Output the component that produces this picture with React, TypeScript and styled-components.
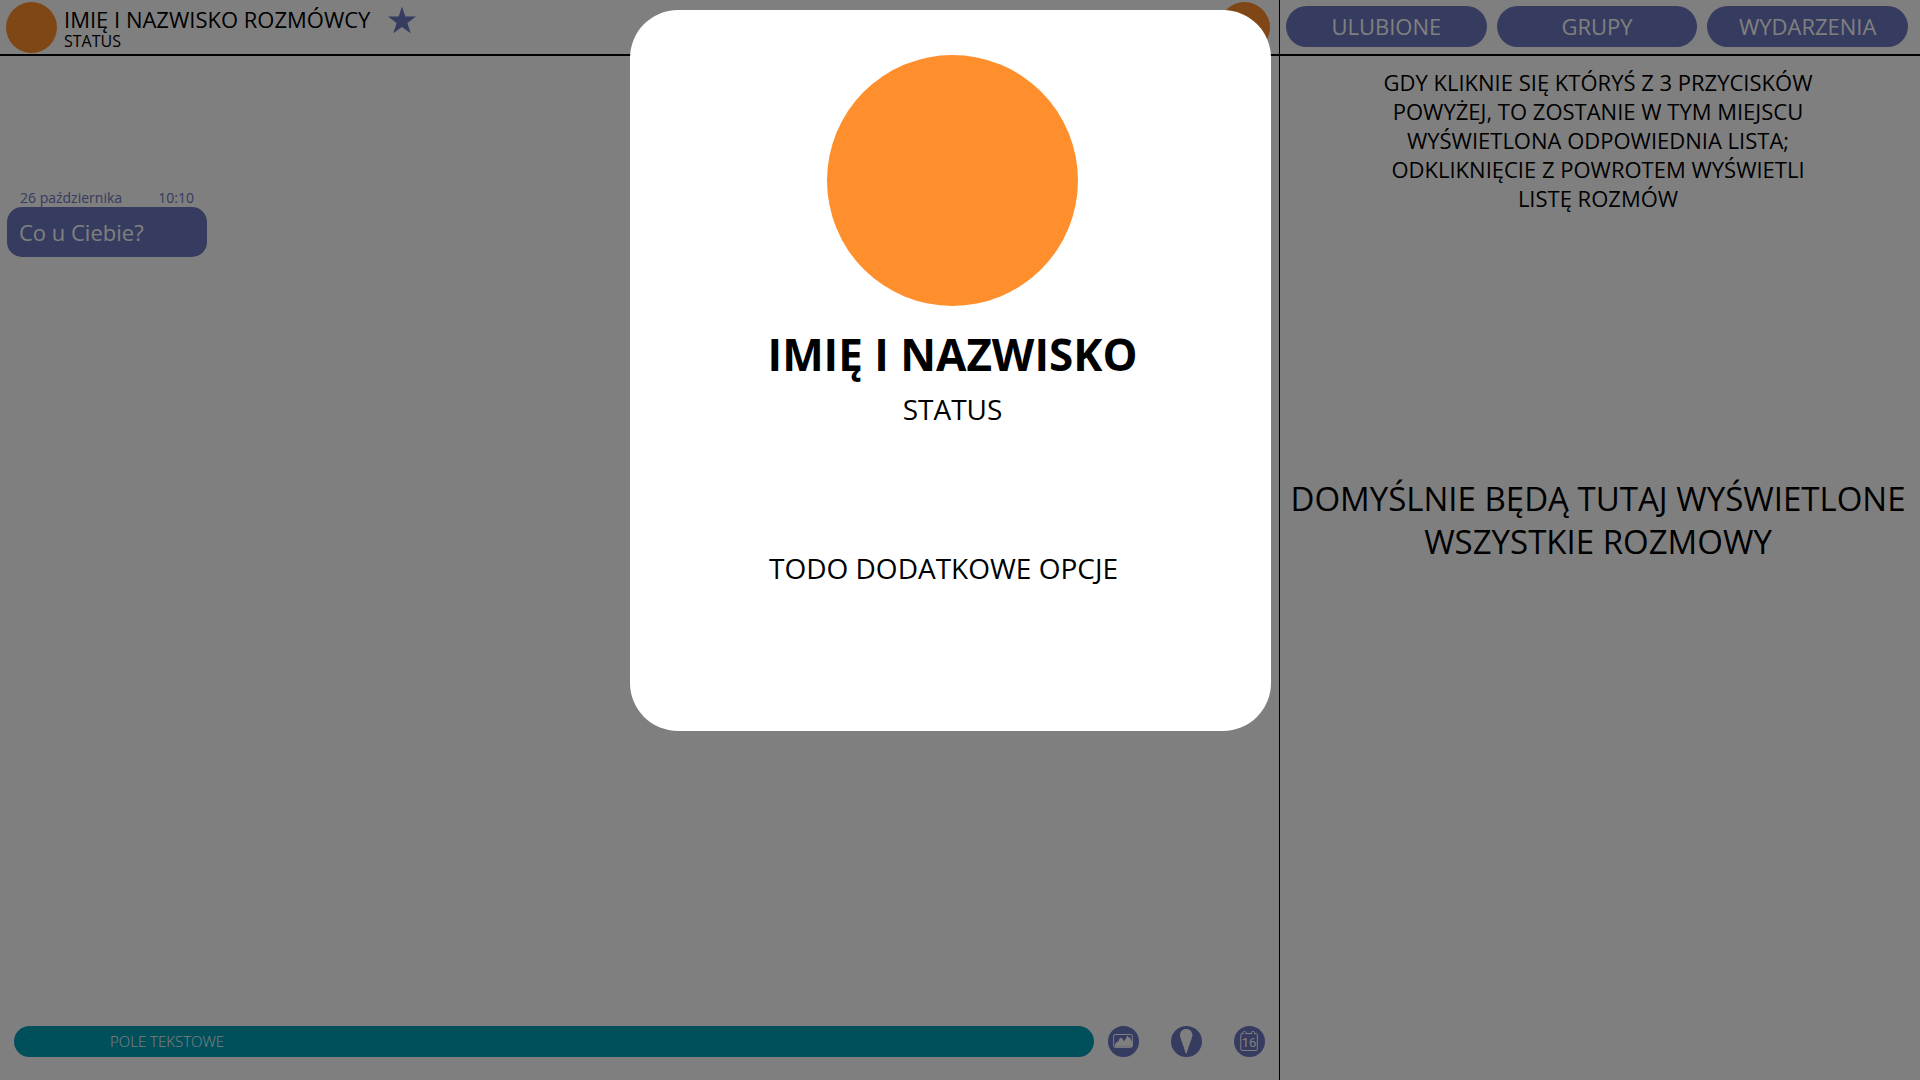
import React from 'react';
import styled, { createGlobalStyle } from 'styled-components';

const color = {
  ink: '#000000',
  paper: '#ffffff',
  violet: '#6c76c0',
  teal: '#00a0b8',
  orange: '#ff8f2d',
};

const GlobalStyle = createGlobalStyle`
  *, *::before, *::after { box-sizing: border-box; }
  body {
    margin: 0;
    background: ${color.paper};
    color: ${color.ink};
    font-family: 'Open Sans', 'Noto Sans', sans-serif;
  }
  h1, h2, p { margin: 0; font-weight: 400; }
  button, input { font-family: inherit; border: 0; margin: 0; }
  button { cursor: pointer; padding: 0; }
`;

const Page = styled.div`
  display: grid;
  grid-template-columns: 2fr 1fr;
  min-height: 100vh;
`;

const Conversation = styled.main`
  display: flex;
  flex-direction: column;
  border-right: 1px solid ${color.ink};
`;

const Sidebar = styled.aside`
  display: flex;
  flex-direction: column;
`;

const Bar = styled.header`
  display: flex;
  align-items: center;
  height: 56px;
  border-bottom: 2px solid ${color.ink};
`;

const ContactBar = styled(Bar)`
  padding: 0 9px 0 6px;
`;

const Avatar = styled.div<{ $size: number }>`
  flex: none;
  width: ${({ $size }) => $size}px;
  height: ${({ $size }) => $size}px;
  border-radius: 50%;
  background: ${color.orange};
`;

const Contact = styled.div`
  margin: 0 18px 0 7px;
`;

const ContactName = styled.h2`
  font-size: 22px;
  line-height: 27px;
`;

const ContactStatus = styled.p`
  font-size: 16px;
  line-height: 16px;
`;

const StarButton = styled.button`
  align-self: flex-start;
  display: flex;
  margin: 6px auto 0 0;
  background: none;
  color: ${color.violet};
`;

const Messages = styled.section`
  flex: 1;
  padding: 132px 7px 0;
`;

const Message = styled.article`
  width: 200px;
`;

const MessageMeta = styled.div`
  display: flex;
  justify-content: space-between;
  padding: 0 13px;
  color: ${color.violet};
  font-size: 14px;
  line-height: 19px;
`;

const Bubble = styled.p`
  padding: 0 12px;
  border-radius: 15px;
  background: ${color.violet};
  color: ${color.paper};
  font-size: 22px;
  line-height: 50px;
`;

const Composer = styled.form`
  display: flex;
  gap: 14px;
  padding: 0 14px 23px;
`;

const TextField = styled.input`
  flex: 1;
  min-width: 0;
  height: 31px;
  padding: 0 96px 2px;
  border-radius: 16px;
  background: ${color.teal};
  color: ${color.paper};
  font-size: 15px;
  font-weight: 300;
  &::placeholder { color: ${color.paper}; opacity: 1; }
`;

const Tools = styled.div`
  display: flex;
  gap: 32px;
`;

const ToolButton = styled.button`
  width: 31px;
  height: 31px;
  border-radius: 50%;
  background: ${color.violet};
  color: ${color.paper};
  svg { display: block; }
`;

const TabBar = styled(Bar)`
  align-items: flex-start;
  gap: 10px;
  padding: 6px 12px 0 6px;
`;

const TabButton = styled.button`
  flex: 1;
  height: 41px;
  padding-bottom: 2px;
  border-radius: 21px;
  background: ${color.violet};
  color: ${color.paper};
  font-size: 22px;
`;

const Lists = styled.div`
  display: flex;
  flex-direction: column;
  align-items: center;
  padding: 12px 8px 0 4px;
  text-align: center;
`;

const Hint = styled.p`
  max-width: 440px;
  font-size: 22px;
  line-height: 29px;
`;

const DefaultNotice = styled.p`
  margin-top: 264px;
  font-size: 33px;
  line-height: 43px;
`;

const Overlay = styled.div`
  position: fixed;
  inset: 0;
  display: flex;
  justify-content: center;
  align-items: flex-start;
  padding: 10px 19px 10px 0;
  background: rgba(0, 0, 0, 0.5);
`;

const ProfileCard = styled.section`
  display: flex;
  flex-direction: column;
  align-items: center;
  width: 641px;
  min-height: 721px;
  padding: 45px 0 45px 4px;
  border-radius: 48px;
  background: ${color.paper};
`;

const ProfileName = styled.h1`
  margin-top: 20px;
  font-size: 44px;
  font-weight: 700;
  line-height: 56px;
`;

const ProfileStatus = styled.p`
  margin-top: 9px;
  font-size: 28px;
  line-height: 36px;
`;

const ProfileOptions = styled.p`
  margin-top: 123px;
  padding-right: 18px;
  font-size: 28px;
  line-height: 36px;
`;

const StarIcon = () => (
  <svg width="28" height="28" viewBox="0 0 28 28" fill="currentColor" aria-hidden="true">
    <path d="M14 .5l3.3 10.1H28l-8.6 6.3 3.3 10.4L14 21l-8.7 6.3 3.3-10.4L0 10.6h10.7z" />
  </svg>
);

const PictureIcon = () => (
  <svg width="31" height="31" viewBox="0 0 31 31" fill="none" aria-hidden="true">
    <rect x="5.7" y="8.5" width="18.6" height="12.9" rx="1.5" stroke="currentColor" />
    <path d="M7 18.6l2-3 .9.3 2.4-4.3.9 1 .8-.6 2 3.4 3.6-6 1.2 2.2.9-.3 2.8 5.7v3.8H6.500z" fill="currentColor" />
  </svg>
);

const PinIcon = () => (
  <svg width="31" height="31" viewBox="0 0 31 31" fill="currentColor" aria-hidden="true">
    <path d="M15.2 3C11.6 3 9 5.6 9 9.1c0 1.6.5 3.1 1.1 4.7 1.7 4.5 3.3 9.2 4.5 13.3.2.8.9.8 1.1 0 1.2-4.1 2.8-8.8 4.500-13.3.6-1.6 1.2-3.1 1.2-4.7C21.4 5.6 18.8 3 15.2 3z" />
  </svg>
);

const CalendarIcon = () => (
  <svg width="31" height="31" viewBox="0 0 31 31" fill="none" aria-hidden="true">
    <path
      d="M9 7.5H7.8a1 1 0 0 0-1 1v15a1 1 0 0 0 1 1h14.5a1 1 0 0 0 1-1v-15a1 1 0 0 0-1-1H20.5M12 7.5h5.5M9 8.2V6.5q0-1 1.5-1t1.5 1v1.7M17.5 8.2V6.5q0-1 1.5-1t1.5 1v1.7"
      stroke="currentColor"
    />
    <text x="15" y="21" textAnchor="middle" fontFamily="Roboto, sans-serif" fontSize="13" fill="currentColor">
      16
    </text>
  </svg>
);

const tabs = ['ULUBIONE', 'GRUPY', 'WYDARZENIA'];

export default function App() {
  return (
    <>
      <GlobalStyle />
      <Page>
        <Conversation>
          <ContactBar>
            <Avatar $size={51} />
            <Contact>
              <ContactName>IMIĘ I NAZWISKO ROZMÓWCY</ContactName>
              <ContactStatus>STATUS</ContactStatus>
            </Contact>
            <StarButton type="button" aria-label="Ulubione">
              <StarIcon />
            </StarButton>
            <Avatar $size={51} />
          </ContactBar>
          <Messages>
            <Message>
              <MessageMeta>
                <span>26 października</span>
                <time>10:10</time>
              </MessageMeta>
              <Bubble>Co u Ciebie?</Bubble>
            </Message>
          </Messages>
          <Composer onSubmit={(event) => event.preventDefault()}>
            <TextField type="text" placeholder="POLE TEKSTOWE" aria-label="Pole tekstowe" />
            <Tools>
              <ToolButton type="button" aria-label="Zdjęcie">
                <PictureIcon />
              </ToolButton>
              <ToolButton type="button" aria-label="Lokalizacja">
                <PinIcon />
              </ToolButton>
              <ToolButton type="button" aria-label="Wydarzenie">
                <CalendarIcon />
              </ToolButton>
            </Tools>
          </Composer>
        </Conversation>
        <Sidebar>
          <TabBar>
            {tabs.map((tab) => (
              <TabButton key={tab} type="button">
                {tab}
              </TabButton>
            ))}
          </TabBar>
          <Lists>
            <Hint>
              GDY KLIKNIE SIĘ KTÓRYŚ Z 3 PRZYCISKÓW POWYŻEJ, TO ZOSTANIE W TYM MIEJSCU WYŚWIETLONA
              ODPOWIEDNIA LISTA; ODKLIKNIĘCIE Z POWROTEM WYŚWIETLI LISTĘ ROZMÓW
            </Hint>
            <DefaultNotice>DOMYŚLNIE BĘDĄ TUTAJ WYŚWIETLONE WSZYSTKIE ROZMOWY</DefaultNotice>
          </Lists>
        </Sidebar>
      </Page>
      <Overlay>
        <ProfileCard role="dialog" aria-modal="true" aria-labelledby="profile-name">
          <Avatar $size={251} />
          <ProfileName id="profile-name">IMIĘ I NAZWISKO</ProfileName>
          <ProfileStatus>STATUS</ProfileStatus>
          <ProfileOptions>TODO DODATKOWE OPCJE</ProfileOptions>
        </ProfileCard>
      </Overlay>
    </>
  );
}
